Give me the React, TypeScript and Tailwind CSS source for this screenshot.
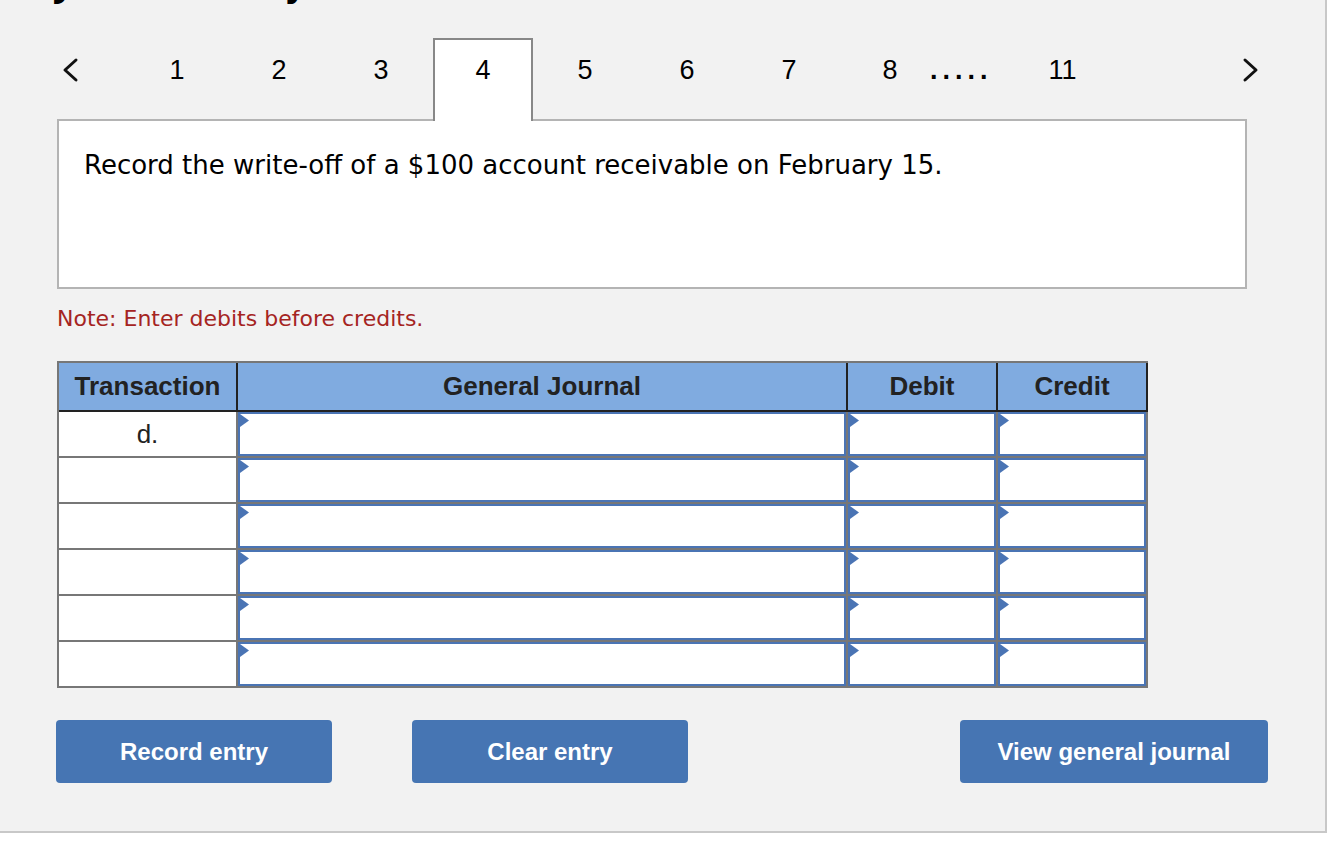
const tabs = ["1", "2", "3", "4", "5", "6", "7"];

const Chevron = ({ dir }: { dir: "left" | "right" }) => (
  <svg width="20" height="26" viewBox="0 0 20 26" fill="none">
    <polyline
      points={dir === "left" ? "16,3 5,13 16,23" : "4,3 15,13 4,23"}
      stroke="#111"
      strokeWidth="3"
      strokeLinecap="round"
      strokeLinejoin="round"
    />
  </svg>
);

const InputCell = ({ width }: { width: string }) => (
  <div className={`${width} h-[46px] border-r-2 border-b-2 border-[#777]`}>
    <div className="relative h-full w-full border-2 border-[#4a74b4] bg-white">
      <svg
        className="absolute left-0 top-[0px]"
        width="9"
        height="13"
        viewBox="0 0 9 13"
      >
        <polygon points="0,0 9,6.5 0,13" fill="#4a74b4" />
      </svg>
    </div>
  </div>
);

export default function App() {
  const rows = ["d.", "", "", "", "", ""];

  return (
    <div className="min-h-screen bg-white">
      <div
        className="flex h-[833px] w-[1327px] flex-col border-b-2 border-r-2 border-[#c8c8c8] bg-[#f2f2f2]"
        style={{ fontFamily: "'Liberation Sans', Arial, sans-serif" }}
      >
        {/* heading, cut off by the top of the window */}
        <div className="h-[38px] pl-[56px]">
          <p
            className="-mt-[32px] whitespace-nowrap text-[34px] font-bold leading-[34px] text-black"
            style={{ fontFamily: "'DejaVu Sans', Verdana, sans-serif" }}
          >
            Journal entry worksheet
          </p>
        </div>

        {/* tab strip */}
        <div className="flex h-[81px] items-start pl-[57px] text-[27px] leading-[28px] text-black">
          <div className="w-[69px] pl-[3px] pt-[19px]">
            <Chevron dir="left" />
          </div>
          {tabs.map((t) =>
            t === "4" ? (
              <div
                key={t}
                className="relative z-10 mx-[1px] h-[83px] w-[100px] border-2 border-b-0 border-[#888] bg-white pt-[16px] text-center"
              >
                {t}
              </div>
            ) : (
              <div key={t} className="w-[102px] pt-[18px] text-center">
                {t}
              </div>
            )
          )}
          <div className="w-[90px] pl-[10px] pt-[18px] text-center">8</div>
          <div className="pt-[18px] font-bold tracking-[5px]">.....</div>
          <div className="ml-[56px] pt-[18px]">11</div>
          <div className="flex-1" />
          <div className="mr-[64px] pt-[19px]">
            <Chevron dir="right" />
          </div>
        </div>

        {/* question box */}
        <div className="ml-[57px] h-[170px] w-[1190px] border-2 border-[#b4b4b4] bg-white pl-[25px] pt-[29px]">
          <p
            className="text-[26px] leading-[31px] text-black"
            style={{ fontFamily: "'DejaVu Sans', Verdana, sans-serif" }}
          >
            Record the write-off of a $100 account receivable on February 15.
          </p>
        </div>

        <p
          className="ml-[57px] mt-[17px] text-[22px] leading-[26px] text-[#a52422]"
          style={{ fontFamily: "'DejaVu Sans', Verdana, sans-serif" }}
        >
          Note: Enter debits before credits.
        </p>

        {/* journal table */}
        <div className="ml-[57px] mt-[29px] w-[1091px] border-l-2 border-t-2 border-[#777]">
          <div className="flex h-[49px] bg-[#80abe0] text-[26px] font-bold text-[#222]">
            <div className="flex w-[179px] items-center justify-center border-b-2 border-r-2 border-[#222]">
              Transaction
            </div>
            <div className="flex w-[610px] items-center justify-center border-b-2 border-r-2 border-[#222]">
              General Journal
            </div>
            <div className="flex w-[150px] items-center justify-center border-b-2 border-r-2 border-[#222]">
              Debit
            </div>
            <div className="flex w-[150px] items-center justify-center border-b-2 border-r-2 border-[#222]">
              Credit
            </div>
          </div>
          {rows.map((label, i) => (
            <div key={i} className="flex">
              <div className="flex h-[46px] w-[179px] items-center justify-center border-b-2 border-r-2 border-[#777] bg-white text-[26px] text-[#222]">
                {label}
              </div>
              <InputCell width="w-[610px]" />
              <InputCell width="w-[150px]" />
              <InputCell width="w-[150px]" />
            </div>
          ))}
        </div>

        {/* actions */}
        <div className="mt-[32px] flex text-[24px] font-bold text-white">
          <button className="ml-[56px] flex h-[63px] w-[276px] items-center justify-center rounded-[4px] bg-[#4675b3]">
            Record entry
          </button>
          <button className="ml-[80px] flex h-[63px] w-[276px] items-center justify-center rounded-[4px] bg-[#4675b3]">
            Clear entry
          </button>
          <button className="ml-[272px] flex h-[63px] w-[308px] items-center justify-center rounded-[4px] bg-[#4675b3]">
            View general journal
          </button>
        </div>
      </div>
    </div>
  );
}
